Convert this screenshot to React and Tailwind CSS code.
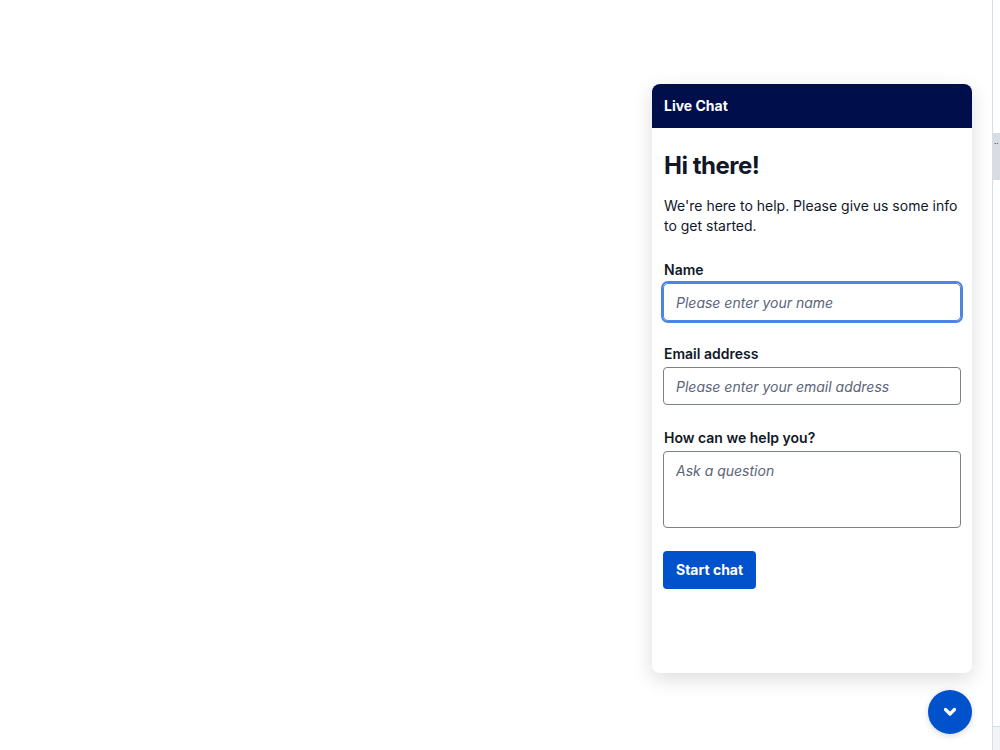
export default function App() {
  return (
    <div className="flex h-[750px] w-full overflow-hidden bg-white font-['Inter','Liberation_Sans',sans-serif] text-[#101828]">
      {/* Page area with the chat widget docked bottom-right */}
      <div className="flex flex-1 flex-col items-end pt-[84px] pr-[20px]">
        <ChatPanel />
        <button className="mt-[17px] flex h-[44px] w-[44px] items-center justify-center rounded-full bg-[#0052cc] text-white shadow-[0_2px_6px_rgba(0,0,0,0.15)]">
          <svg width="14" height="10" viewBox="0 0 14 10" fill="none">
            <polyline
              points="2.5,2.5 7,7 11.5,2.5"
              stroke="currentColor"
              strokeWidth="3.2"
              strokeLinecap="round"
              strokeLinejoin="round"
            />
          </svg>
        </button>
      </div>

      {/* Scrollbar-like strip on the right edge */}
      <div className="flex w-[8px] flex-col border-l border-[#d3deed]">
        <div className="mt-[133px] flex h-[47px] items-start bg-[#d9dde3] pt-[6px] pl-[1px]">
          <span className="text-[8px] leading-none text-[#333]">··</span>
        </div>
        <div className="flex-1" />
        <div className="h-[24px] border-t border-[#d3deed] bg-[#f1f3f7]" />
      </div>
    </div>
  );
}

function ChatPanel() {
  return (
    <div className="flex h-[589px] w-[320px] flex-col overflow-hidden rounded-lg bg-white shadow-[0_6px_20px_rgba(0,0,0,0.14)]">
      <div className="flex h-[44px] items-center bg-[#000f4c] px-3">
        <span className="text-sm font-bold text-white">Live Chat</span>
      </div>

      <div className="flex flex-col px-[11px] pt-[22px]">
        <h1 className="pl-px text-2xl leading-8 font-bold tracking-[-0.02em]">Hi there!</h1>
        <p className="mt-[14px] pl-px text-sm leading-5">
          We're here to help. Please give us some info to get started.
        </p>

        <Field label="Name" className="mt-6">
          <input
            placeholder="Please enter your name"
            className="h-[38px] w-full rounded-[5px] border border-[#4a86df] px-3 text-sm italic outline-none shadow-[0_0_0_2px_#4a86df] placeholder:text-[#5b6478]"
          />
        </Field>

        <Field label="Email address" className="mt-[23px]">
          <input
            placeholder="Please enter your email address"
            className="h-[38px] w-full rounded-[4px] border border-[#7a808c] px-3 text-sm italic outline-none placeholder:text-[#5b6478]"
          />
        </Field>

        <Field label="How can we help you?" className="mt-[23px]">
          <textarea
            placeholder="Ask a question"
            className="block h-[77px] w-full resize-none rounded-[4px] border border-[#7a808c] px-3 py-[9px] text-sm italic outline-none placeholder:text-[#5b6478]"
          />
        </Field>

        <div className="mt-[23px]">
          <button className="h-[38px] rounded-[4px] bg-[#0052cc] px-[13px] text-sm font-bold text-white">
            Start chat
          </button>
        </div>
      </div>
    </div>
  );
}

function Field({ label, className = '', children }) {
  return (
    <div className={className}>
      <label className="block pl-px text-sm leading-5 font-semibold">{label}</label>
      <div className="mt-[3px]">{children}</div>
    </div>
  );
}
